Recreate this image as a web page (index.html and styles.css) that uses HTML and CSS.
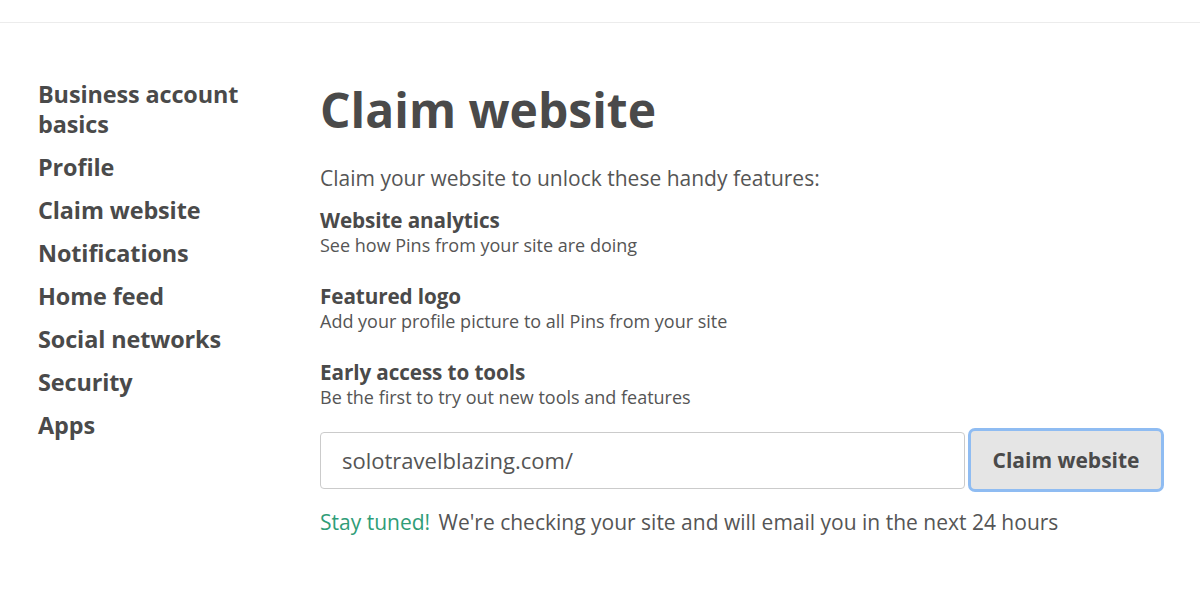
FILE: index.html
```html
<!DOCTYPE html>
<html lang="en">
<head>
  <meta charset="UTF-8" />
  <title>Claim website</title>
  <link rel="stylesheet" href="styles.css">
</head>
<body>
  <div class="topbar"></div>

  <div class="page">
    <nav class="side-nav">
      <a href="#">Business account basics</a>
      <a href="#">Profile</a>
      <a href="#">Claim website</a>
      <a href="#">Notifications</a>
      <a href="#">Home feed</a>
      <a href="#">Social networks</a>
      <a href="#">Security</a>
      <a href="#">Apps</a>
    </nav>

    <main class="content">
      <h1>Claim website</h1>
      <p class="intro">Claim your website to unlock these handy features:</p>

      <div class="feature">
        <h3>Website analytics</h3>
        <p>See how Pins from your site are doing</p>
      </div>
      <div class="feature">
        <h3>Featured logo</h3>
        <p>Add your profile picture to all Pins from your site</p>
      </div>
      <div class="feature">
        <h3>Early access to tools</h3>
        <p>Be the first to try out new tools and features</p>
      </div>

      <div class="claim-row">
        <input type="text" class="site-input" value="solotravelblazing.com/" />
        <button class="claim-btn">Claim website</button>
      </div>

      <p class="status"><span class="ok">Stay tuned!</span> We're checking your site and will email you in the next 24 hours</p>
    </main>
  </div>
</body>
</html>
```

FILE: styles.css
```css
body {
  font-family: "Open Sans", "Noto Sans", sans-serif;
  margin: 0;
  padding: 0;
  background: #fff;
  color: #555;
}
.topbar {
  height: 22px;
  border-bottom: 1px solid #ececec;
}
.page {
  display: flex;
  padding-top: 56px;
}
.side-nav {
  width: 230px;
  margin-left: 38px;
  margin-right: 52px;
  display: flex;
  flex-direction: column;
  gap: 13px;
}
.side-nav a {
  color: #4a4a4a;
  text-decoration: none;
  font-weight: 700;
  font-size: 23.4px;
  line-height: 30px;
  letter-spacing: -0.1px;
}
.content {
  flex: 1;
  padding-right: 36px;
}
.content h1 {
  margin: 0;
  font-size: 48px;
  line-height: 62px;
  color: #4a4a4a;
  font-weight: 700;
}
.intro {
  margin: 23px 0 14px;
  font-size: 21px;
  line-height: 28px;
}
.feature {
  margin-bottom: 26px;
}
.feature h3 {
  margin: 0;
  font-size: 20.7px;
  line-height: 28px;
  color: #4a4a4a;
  font-weight: 700;
  letter-spacing: -0.1px;
}
.feature p {
  margin: 0;
  font-size: 18px;
  line-height: 22px;
}
.claim-row {
  display: flex;
  align-items: center;
  gap: 3px;
  margin-top: -6px;
}
.site-input {
  flex: 1;
  height: 57px;
  box-sizing: border-box;
  border: 1px solid #cbcbcb;
  border-radius: 4px;
  padding: 0 21px;
  font-family: inherit;
  font-size: 22px;
  color: #555;
}
.claim-btn {
  width: 196px;
  height: 64px;
  box-sizing: border-box;
  background: #e5e5e5;
  border: 3px solid #8fbcf2;
  border-radius: 7px;
  font-family: inherit;
  font-weight: 700;
  font-size: 21px;
  color: #4a4a4a;
}
.status {
  margin: 16px 0 0;
  font-size: 21px;
  line-height: 28px;
}
.status .ok {
  color: #2f9d78;
  margin-right: 3px;
}
```
